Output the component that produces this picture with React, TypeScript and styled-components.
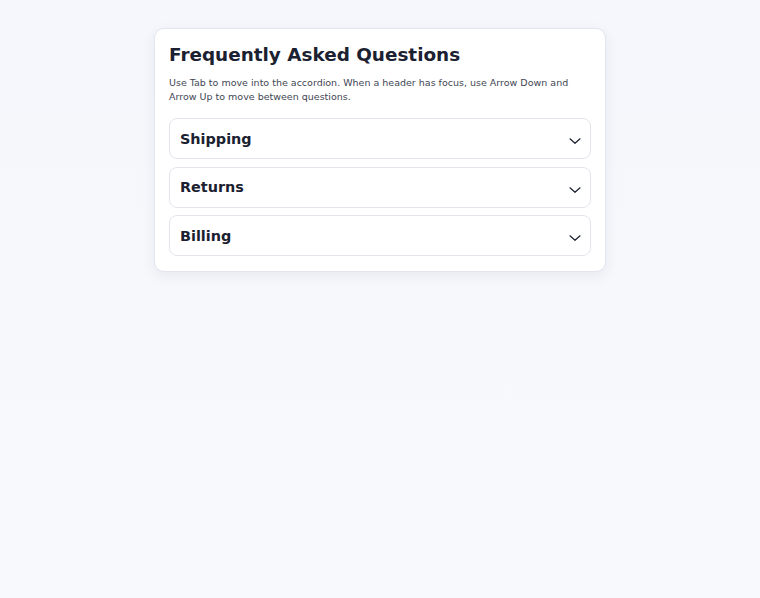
import React, { useState } from 'react';
import styled, { createGlobalStyle } from 'styled-components';

const GlobalStyle = createGlobalStyle`
  html, body {
    margin: 0;
    padding: 0;
    min-height: 100%;
  }
  body {
    background: linear-gradient(180deg, #f5f7fc 0%, #f8f9fc 100%);
    font-family: "DejaVu Sans", "Liberation Sans", sans-serif;
    color: #1a202c;
  }
`;

const Page = styled.main`
  min-height: 598px;
  display: flex;
  justify-content: center;
  align-items: flex-start;
  padding-top: 28px;
  box-sizing: border-box;
`;

const Card = styled.section`
  width: 452px;
  box-sizing: border-box;
  background: #ffffff;
  border: 1px solid #e3e6ec;
  border-radius: 10px;
  box-shadow: 0 4px 14px rgba(30, 40, 70, 0.07);
  padding: 14px 14px 15px 14px;
`;

const Title = styled.h1`
  margin: 0;
  font-size: 18.4px;
  line-height: 24px;
  font-weight: 700;
  color: #1b2130;
`;

const Hint = styled.p`
  margin: 9px 0 14px;
  font-size: 9.5px;
  line-height: 14px;
  color: #3f4654;
`;

const List = styled.div`
  display: flex;
  flex-direction: column;
  gap: 7.5px;
`;

const Item = styled.div`
  border: 1px solid #e2e5ea;
  border-radius: 8px;
  background: #fff;
`;

const Header = styled.button<{ $open: boolean }>`
  width: 100%;
  display: flex;
  align-items: center;
  justify-content: space-between;
  background: none;
  border: none;
  padding: 9px 8px 9px 10px;
  height: 39px;
  font-family: inherit;
  font-size: 14.4px;
  font-weight: 700;
  color: #1b2130;
  cursor: pointer;
  text-align: left;

  svg {
    margin-top: 5px;
    transform: rotate(${(p) => (p.$open ? '180deg' : '0deg')});
  }
`;

const Panel = styled.div`
  padding: 0 10px 12px;
  font-size: 11px;
  line-height: 15px;
  color: #3f4654;
`;

const Chevron = () => (
  <svg width="14" height="14" viewBox="0 0 14 14" fill="none">
    <path d="M2 4.8 L7 9.3 L12 4.8" stroke="#1b2130" strokeWidth="1.2" strokeLinecap="round" strokeLinejoin="round" />
  </svg>
);

const faqs = [
  { q: 'Shipping', a: 'Orders ship within two business days.' },
  { q: 'Returns', a: 'Items can be returned within 30 days of delivery.' },
  { q: 'Billing', a: 'We accept all major credit cards.' },
];

const App: React.FC = () => {
  const [open, setOpen] = useState<number | null>(null);

  return (
    <>
      <GlobalStyle />
      <Page>
        <Card>
          <Title>Frequently Asked Questions</Title>
          <Hint>
            Use Tab to move into the accordion. When a header has focus, use Arrow Down and Arrow Up to move
            between questions.
          </Hint>
          <List>
            {faqs.map((f, i) => (
              <Item key={f.q}>
                <Header $open={open === i} aria-expanded={open === i} onClick={() => setOpen(open === i ? null : i)}>
                  {f.q}
                  <Chevron />
                </Header>
                {open === i && <Panel>{f.a}</Panel>}
              </Item>
            ))}
          </List>
        </Card>
      </Page>
    </>
  );
};

export default App;
